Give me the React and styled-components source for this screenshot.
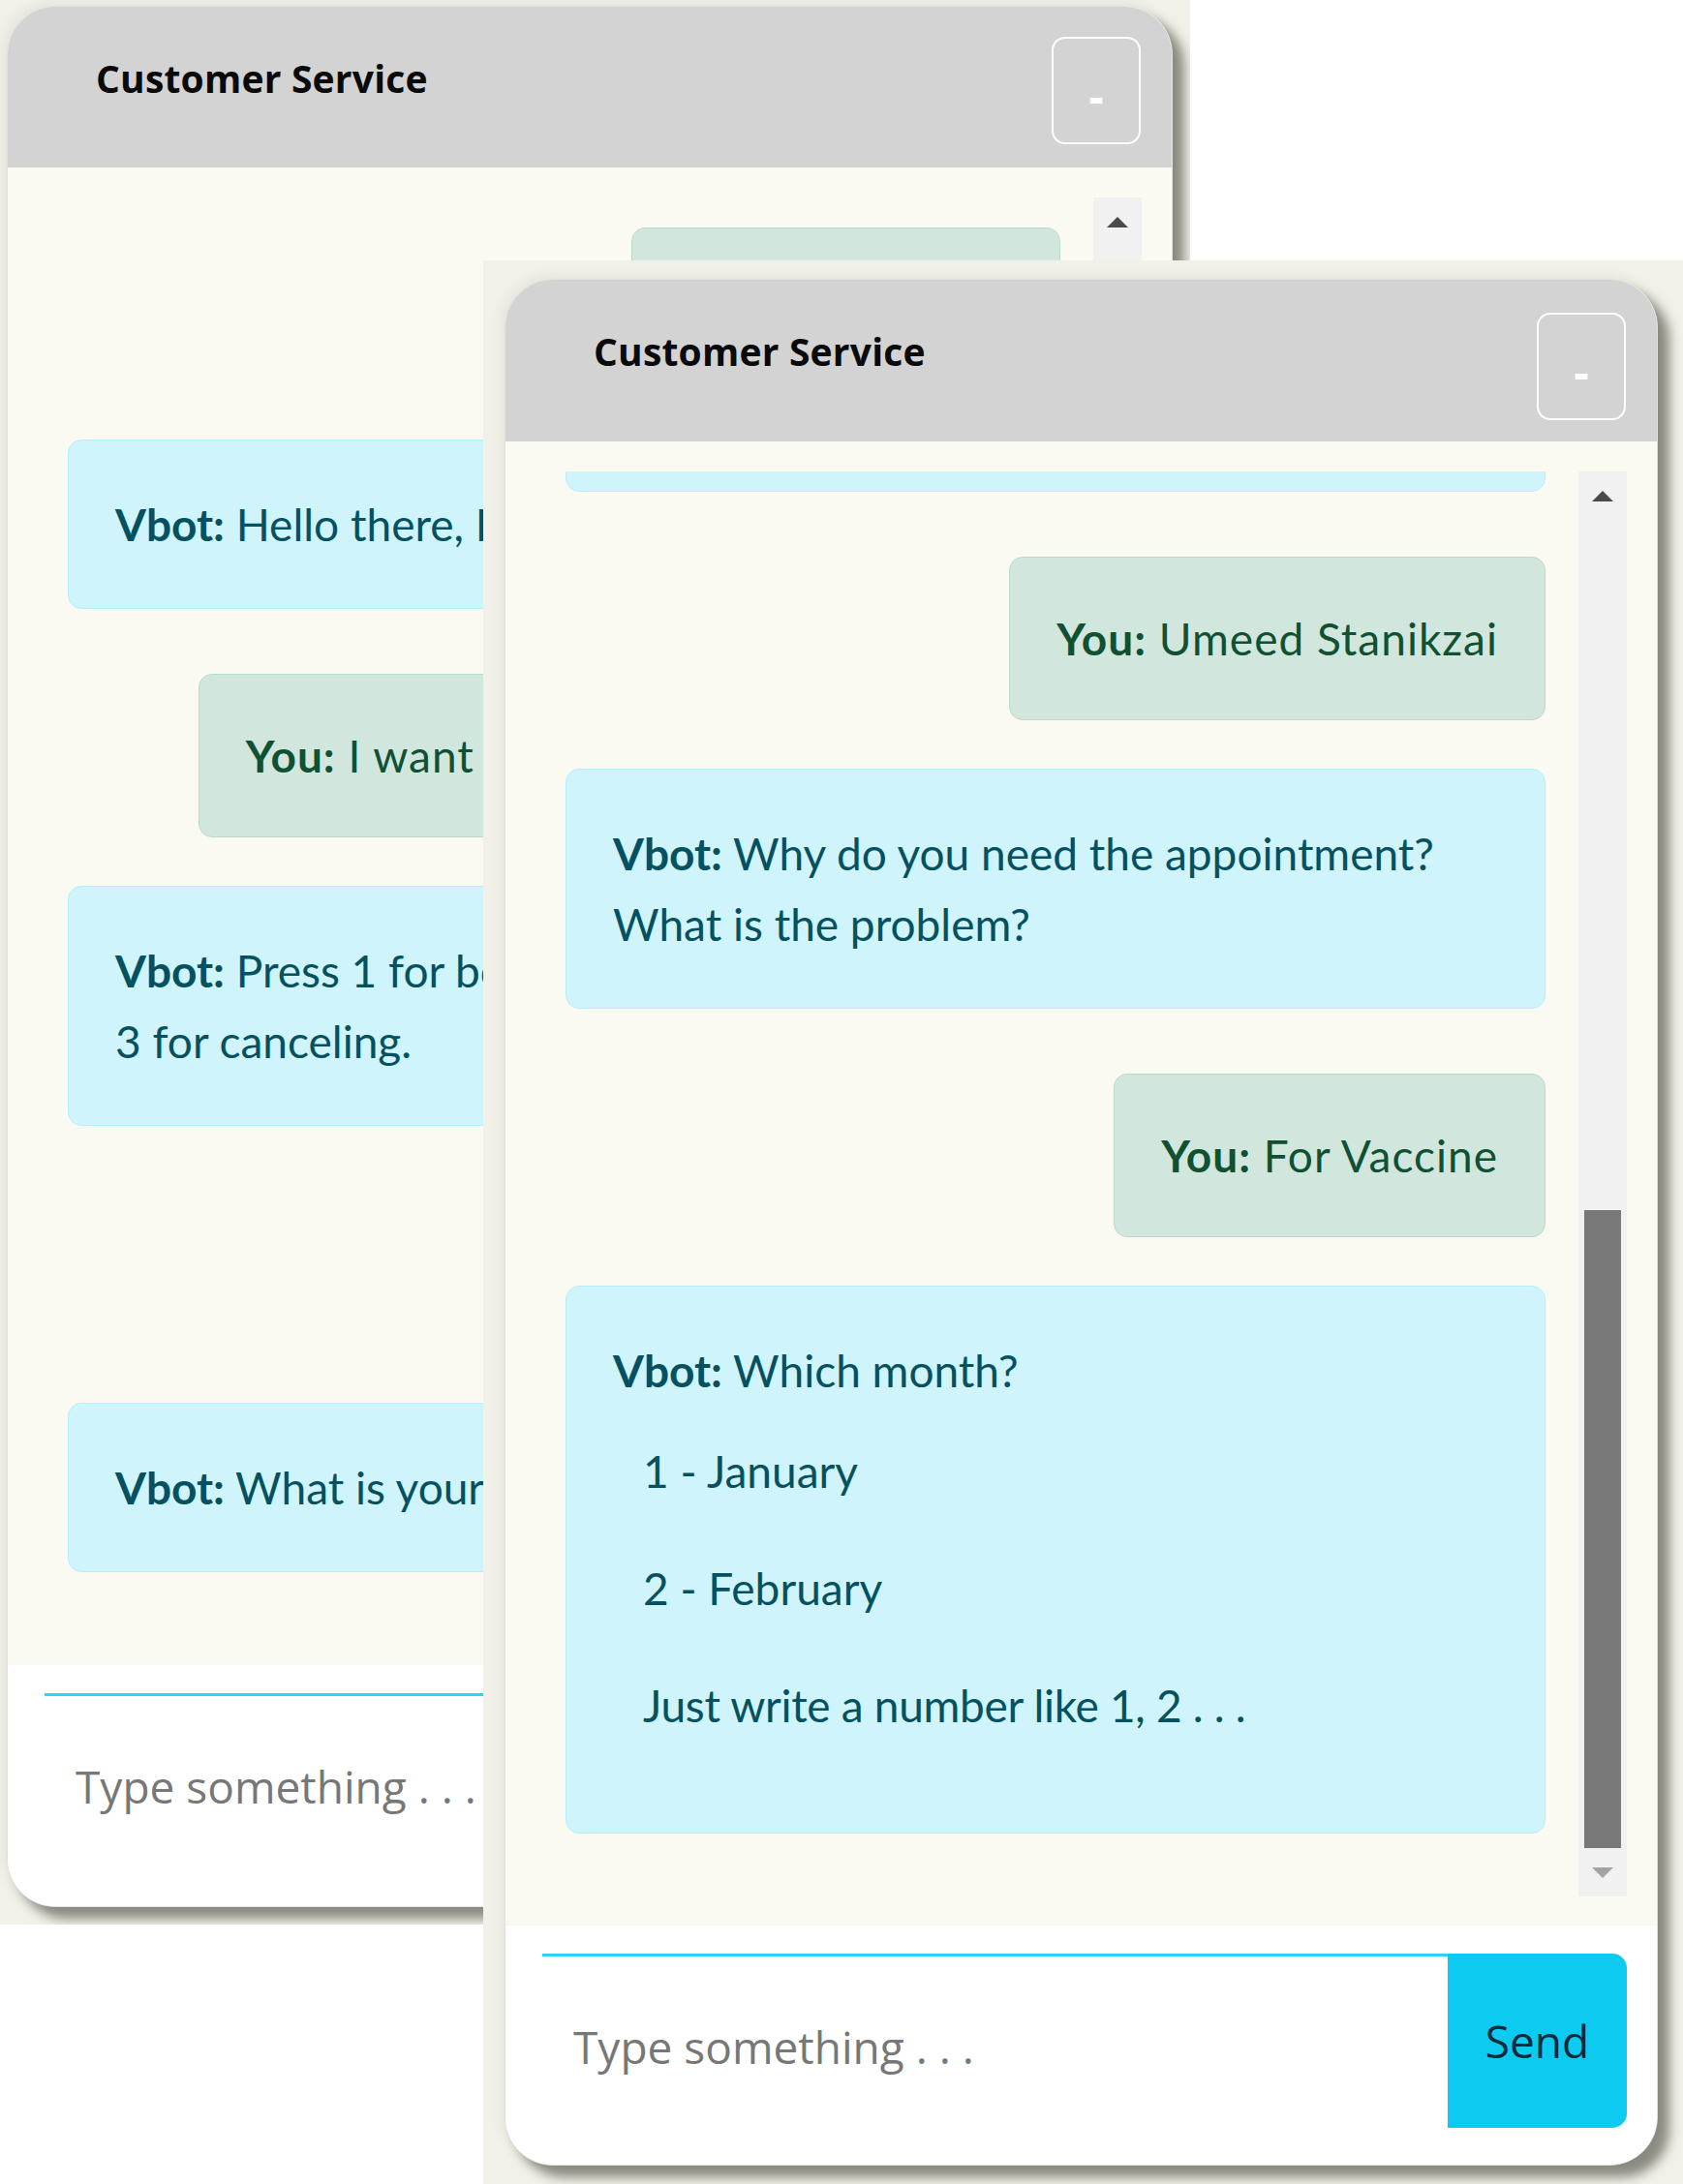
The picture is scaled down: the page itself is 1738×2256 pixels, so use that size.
import React from 'react'
import styled, { createGlobalStyle } from 'styled-components'

const GlobalStyle = createGlobalStyle`
  html, body {
    margin: 0;
    padding: 0;
    background: #ffffff;
  }
  body {
    font-family: "Open Sans", "Noto Sans", sans-serif;
  }
  * {
    box-sizing: border-box;
  }
`

const Desk = styled.div`
  position: relative;
  width: 1738px;
  height: 2256px;
  overflow: hidden;
  background: #ffffff;
`

// each screenshot tile sits where it was pasted on the canvas
const Shot = styled.div`
  position: absolute;
  left: ${p => p.$x}px;
  top: ${p => p.$y}px;
  width: ${p => p.$w}px;
  height: ${p => p.$h}px;
  padding: ${p => p.$pad};
  background: #f1f1e9;
  overflow: hidden;
`

const Window = styled.div`
  width: ${p => p.$w}px;
  height: ${p => p.$h}px;
  display: flex;
  flex-direction: column;
  border-radius: 50px;
  border: 1px solid #e2e2dc;
  overflow: hidden;
  background: #ffffff;
  box-shadow: 12px 12px 12px rgba(70, 70, 60, 0.6), -3px -3px 14px rgba(0, 0, 0, 0.06);
`

const Header = styled.div`
  flex: 0 0 ${p => p.$h}px;
  background: #d3d3d3;
  display: flex;
  justify-content: space-between;
  align-items: flex-start;
  padding: ${p => p.$top}px 32px 0 91px;
`

const Title = styled.h1`
  margin: ${p => 50 - p.$top}px 0 0;
  font: 700 39px/47px "Open Sans", sans-serif;
  letter-spacing: 0.2px;
  color: #0a0a0a;
`

const MinButton = styled.button`
  width: 92px;
  height: 111px;
  border: 2px solid #ffffff;
  border-radius: 14px;
  background: transparent;
  color: #ffffff;
  font: 700 48px/1 "Open Sans", sans-serif;
  padding: 10px 0 0;
`

const Body = styled.div`
  flex: 1;
  min-height: 0;
  display: flex;
  background: #fafaf2;
  padding: 31px 31px 30px 31px;
`

const Thread = styled.div`
  flex: 1;
  min-width: 0;
  display: flex;
  flex-direction: column;
  justify-content: ${p => (p.$end ? 'flex-end' : 'flex-start')};
  overflow: hidden;
  padding: 14px 34px 15px 31px;
`

const Bubble = styled.div`
  flex-shrink: 0;
  align-self: ${p => (p.$you ? 'flex-end' : 'stretch')};
  margin: ${p => (p.$you ? '17px 0 50px' : '0 0 50px')};
  padding: ${p => (p.$you ? '47px 48px' : '50px 48px')};
  border: 1px solid ${p => (p.$you ? '#badbcc' : '#b6effb')};
  background: ${p => (p.$you ? '#d1e7dd' : '#cff4fc')};
  color: ${p => (p.$you ? '#0f5132' : '#055160')};
  border-radius: 14px;
  font: 400 46px/73px Lato, "Open Sans", sans-serif;
  letter-spacing: ${p => (p.$you ? '1px' : '0')};
  white-space: nowrap;
`

const Who = styled.b`
  font-weight: 700;
`

const Options = styled.div`
  padding: 31px 0 0 31px;
`

const Option = styled.div`
  margin-bottom: 48px;

  &:last-child {
    margin-bottom: 45px;
    letter-spacing: -0.3px;
  }
`

const Track = styled.div`
  flex: 0 0 50px;
  display: flex;
  flex-direction: column;
  background: #f1f1f1;
`

const Arrow = styled.div`
  flex: 0 0 50px;
  display: flex;
  align-items: center;
  justify-content: center;
  color: ${p => (p.$off ? '#a3a3a3' : '#4a4a4a')};
`

const Gap = styled.div`
  flex: 1;
`

const Thumb = styled.div`
  flex: 0 0 ${p => p.$h}px;
  margin: 0 6px;
  background: #787878;
`

const Composer = styled.form`
  flex: 0 0 ${p => p.$h}px;
  display: flex;
  padding: 29px 31px ${p => p.$h - 209}px 38px;
  background: #ffffff;
`

const Field = styled.input`
  flex: 1;
  min-width: 0;
  border: none;
  border-top: 3px solid #30d2f3;
  outline: none;
  background: transparent;
  padding: 8px 0 0 32px;
  font: 400 46px "Open Sans", sans-serif;
  color: #333333;

  &::placeholder {
    color: #777777;
  }
`

const Send = styled.button`
  flex: 0 0 185px;
  border: none;
  border-radius: 0 15px 15px 0;
  background: #0dcaf0;
  color: #0b2a3a;
  font: 400 46px "Open Sans", sans-serif;
  padding: 0;
`

const Tri = ({ down }) => (
  <svg width="24" height="13" viewBox="0 0 24 13">
    <path d={down ? 'M1 1 L23 1 L12 12 Z' : 'M1 12 L23 12 L12 1 Z'} fill="currentColor" />
  </svg>
)

const Scrollbar = ({ thumb, upOff, downOff }) => (
  <Track>
    <Arrow $off={upOff}><Tri /></Arrow>
    <Gap />
    {thumb ? <Thumb $h={thumb} /> : null}
    <Arrow $off={downOff}><Tri down /></Arrow>
  </Track>
)

const Msg = ({ you, children }) => (
  <Bubble $you={you}>
    <Who>{you ? 'You:' : 'Vbot:'}</Who> {children}
  </Bubble>
)

const ChatWindow = ({ w, h, headH, headTop, footH, end, thumb, upOff, downOff, children }) => (
  <Window $w={w} $h={h}>
    <Header $h={headH} $top={headTop}>
      <Title $top={headTop}>Customer Service</Title>
      <MinButton type="button">-</MinButton>
    </Header>
    <Body>
      <Thread $end={end}>{children}</Thread>
      <Scrollbar thumb={thumb} upOff={upOff} downOff={downOff} />
    </Body>
    <Composer $h={footH} onSubmit={e => e.preventDefault()}>
      <Field placeholder="Type something . . ." />
      <Send type="submit">Send</Send>
    </Composer>
  </Window>
)

const App = () => {
  return (
    <Desk>
      <GlobalStyle />

      <Shot $x={0} $y={0} $w={1229} $h={1988} $pad="6px 0 0 7px">
        <ChatWindow w={1204} h={1964} headH={166} headTop={31} footH={249}>
          <Msg you>Hello Vbot!</Msg>
          <Msg>Hello there, I am Vbot. How can I help?</Msg>
          <Msg you>I want to make the appointment.</Msg>
          <Msg>
            Press 1 for booking, 2 for rescheduling and
            <br />
            3 for canceling.
          </Msg>
          <Msg you>1</Msg>
          <Msg>What is your name?</Msg>
        </ChatWindow>
      </Shot>

      <Shot $x={499} $y={269} $w={1239} $h={1987} $pad="19px 0 0 22px">
        <ChatWindow w={1191} h={1949} headH={167} headTop={34} footH={247} end thumb={659} downOff>
          <Msg>What is your name?</Msg>
          <Msg you>Umeed Stanikzai</Msg>
          <Msg>
            Why do you need the appointment?
            <br />
            What is the problem?
          </Msg>
          <Msg you>For Vaccine</Msg>
          <Bubble>
            <Who>Vbot:</Who> Which month?
            <Options>
              <Option>1 - January</Option>
              <Option>2 - February</Option>
              <Option>Just write a number like 1, 2 . . .</Option>
            </Options>
          </Bubble>
        </ChatWindow>
      </Shot>
    </Desk>
  )
}

export default App
